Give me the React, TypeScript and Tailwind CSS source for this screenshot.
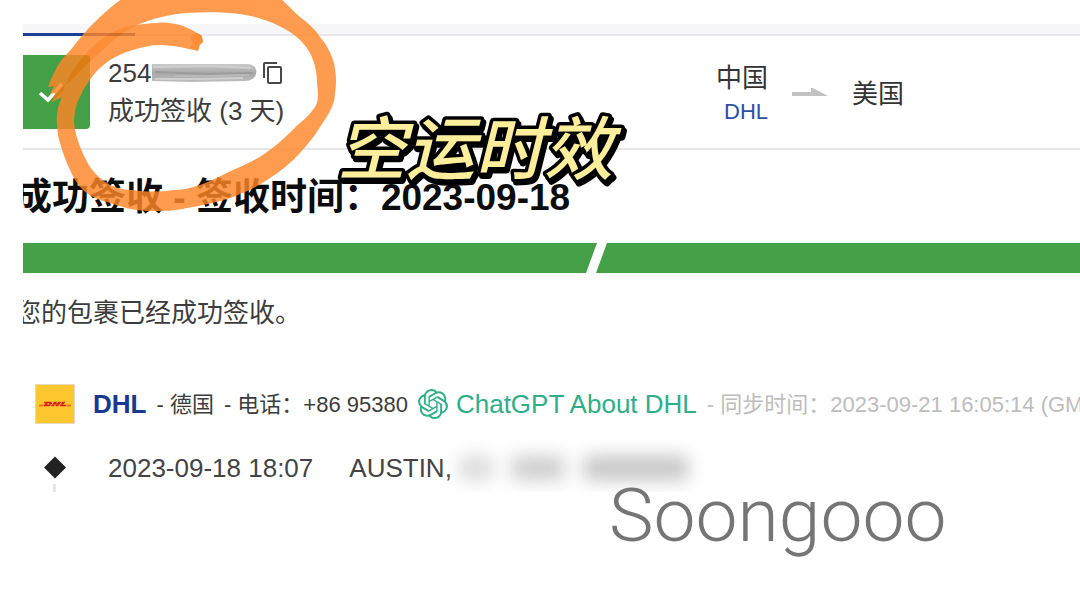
import React from 'react';
import { MdContentCopy } from 'react-icons/md';
import { SiDhl, SiOpenai } from 'react-icons/si';

interface TrackingEvent {
    time: string;
    place: string;
}

const events: TrackingEvent[] = [
    { time: '2023-09-18 18:07', place: 'AUSTIN,' }
];

// Tab strip with the active tab underline
const TabStrip: React.FC = () => (
    <div className="flex h-3 items-end border-b-2 border-[#e8e8ec] bg-[#f7f7fa]">
        <div className="-mb-0.5 h-[3px] w-28 bg-[#1d3f94]" />
    </div>
);

// Hidden part of the tracking number
const Scribble: React.FC = () => (
    <svg className="h-5 w-[106px]" viewBox="0 0 106 20" fill="none">
        <defs>
            <linearGradient id="scribble" x1="0" y1="0" x2="0" y2="1">
                <stop offset="0" stopColor="#c9c9c9" />
                <stop offset="0.5" stopColor="#a9a9a9" />
                <stop offset="1" stopColor="#bdbdbd" />
            </linearGradient>
        </defs>
        <path d="M1 1 H98 Q107 3 105 11 Q103 18 94 18 L40 19 L1 18Z" fill="url(#scribble)" />
        <path d="M2 4 L60 3 L100 5 M4 16 L50 16 L92 15" stroke="#cfcfcf" strokeWidth="2" />
        <path d="M4 9 L30 10 L58 11 L102 10" stroke="#9c9c9c" strokeWidth="2" />
        <path d="M24 13 L54 13 L98 12" stroke="#bcbcbc" strokeWidth="1.5" />
    </svg>
);

const ShipmentHeader: React.FC = () => (
    <header className="grid grid-cols-[693fr_364fr] items-center border-b-2 border-[#e6e6e6] py-[18px]">
        <div className="flex items-center gap-[18px]">
            <div className="flex h-[74px] w-[67px] items-center rounded-r-sm bg-[#43a047] pl-3.5">
                <svg className="size-7" viewBox="0 0 28 28" fill="none">
                    <path d="M3 15 L11 22 L25 6" stroke="#fff" strokeWidth="3.6" />
                </svg>
            </div>
            <div className="text-[26px] leading-[38px] text-[#3c3c3c]">
                <div className="flex items-center">
                    <span>254</span>
                    <Scribble />
                    <button type="button" aria-label="复制" className="ml-1 text-[#484848]">
                        <MdContentCopy className="size-6" />
                    </button>
                </div>
                <p>成功签收 (3 天)</p>
            </div>
        </div>
        <div className="flex items-center gap-6 pt-1 text-[26px] leading-9 text-[#333]">
            <div className="text-right">
                <p>中国</p>
                <a href="#dhl" className="block text-[22px] leading-8 text-[#2a4fa5]">DHL</a>
            </div>
            <svg className="h-3 w-9" viewBox="0 0 36 12">
                <path d="M0 4 H19 V-1 L36 8 H0Z" fill="#c2c2c2" />
            </svg>
            <p>美国</p>
        </div>
    </header>
);

const ProgressBar: React.FC = () => (
    <svg className="block h-[30px] w-full" viewBox="0 0 1057 30" preserveAspectRatio="none">
        <rect width="1057" height="30" fill="#43a047" />
        <path d="M574 0 H584 L573 30 H563Z" fill="#fff" />
    </svg>
);

const CarrierRow: React.FC = () => (
    <div className="ml-3 flex items-center gap-2.5 text-[22px] whitespace-nowrap text-[#3c3c3c]">
        <div className="mr-2 flex size-10 shrink-0 items-center justify-center border border-[#e2d9bf] bg-[#ffc72f]">
            <SiDhl className="size-8 text-[#d8201f]" />
        </div>
        <a href="#dhl" className="text-[26px] font-bold text-[#173a8f]">DHL</a>
        <span>- 德国</span>
        <span>- 电话：+86 95380</span>
        <a href="#chatgpt" className="flex items-center gap-2 text-[26px] text-[#2fae88]">
            <SiOpenai className="size-[30px]" />
            ChatGPT About DHL
        </a>
        <span className="text-[#bdbdbd]">- 同步时间：2023-09-21 16:05:14 (GMT+8)</span>
    </div>
);

const EventRow: React.FC<TrackingEvent> = ({ time, place }) => (
    <li className="flex items-center text-[26px] leading-8 text-[#444]">
        <svg className="ml-5 h-8 w-6" viewBox="0 0 24 32">
            <path d="M12 4.5 L23 15.5 L12 26.5 L1 15.5Z" fill="#222" />
        </svg>
        <time className="ml-[41px]">{time}</time>
        <span className="ml-9">{place}</span>
        <div className="ml-2 flex items-center gap-5 opacity-80 blur-[9px]">
            <div className="h-6 w-8 bg-[#cfcfcf]" />
            <div className="h-6 w-13 bg-[#c0c0c0]" />
            <div className="h-6 w-26 bg-[#b6b6b6]" />
        </div>
    </li>
);

// Hand-drawn marker ring around the tracking number
const MarkerRing: React.FC = () => (
    <svg className="pointer-events-none absolute top-0 left-0 h-[220px] w-[350px]" viewBox="0 0 350 220">
        <g opacity="0.82">
            <path
                fill="#ff8628"
                fillRule="evenodd"
                d="M123 -2 C112 6 105 12 97 20 C87 29 80 38 73 47 C65 56 61 60 57 67 L51 79 L48 87 L54 86 L50 94 L55 93 L52 102 L62 97
                   C58 106 56 114 57 123 C57 130 58 137 60 143 C63 153 66 162 70 170 C74 179 78 185 83 190 C90 196 99 200 107 202
                   C121 207 135 211 150 211 C163 211 175 211 187 208 C204 205 219 202 233 197 C246 192 257 187 267 180
                   C280 172 291 163 300 153 C307 145 314 137 320 127 C329 114 335 104 335 93 C337 81 336 70 333 60
                   C330 51 326 44 320 37 C315 29 308 23 300 17 C293 11 288 5 280 -2 Z
                   M137 25 C152 19 169 14 187 13 C205 12 223 12 240 14 C254 16 266 20 277 25 C286 29 294 34 300 40
                   C306 46 311 53 313 60 C316 68 317 75 317 83 C318 92 319 101 315 107 C311 113 306 118 300 123
                   C289 133 279 144 267 152 C256 160 245 165 233 170 C222 175 211 181 200 185 C191 188 182 190 173 190
                   C160 192 146 192 133 190 C125 190 116 188 110 185 C102 180 96 175 90 167 C82 153 76 139 74 123
                   C74 113 76 104 80 97 C83 90 87 83 92 77 C97 70 103 65 110 60 C117 56 125 52 133 50
                   C142 47 151 45 160 45 C167 45 174 46 180 47 L198 51 L200 45 L203 42 L201 35 L197 33
                   C192 30 187 27 180 25 C172 23 164 22 157 23 C150 23 143 24 137 25Z"
            />
            <path fill="#fc760c" d="M137 25 C119 26 99 38 84 56 C76 65 68 76 63 91 L52 102 C54 95 61 86 70 82 C82 68 96 56 108 45 C118 36 127 30 137 25Z" />
            <path fill="#fc760c" d="M190 37 L197 33 L202 36 L203 42 L199 44 L198 50 L190 48 L193 43Z" />
        </g>
    </svg>
);

// Caption sticker with a rounded outline and a hard shadow
const Caption: React.FC = () => (
    <svg className="absolute top-[100px] left-[330px] h-[100px] w-[320px] text-[69px] font-medium italic drop-shadow-[2px_3px_0_#000]" viewBox="0 0 320 100">
        <text x="7" y="74" fill="#fdee9c" stroke="#000" strokeWidth="7" strokeLinejoin="round" paintOrder="stroke">空运时效</text>
    </svg>
);

const App: React.FC = () => (
    <main className="relative min-h-screen overflow-hidden bg-white font-['Liberation_Sans','Noto_Sans_CJK_SC',sans-serif]">
        <div className="ml-[23px] overflow-hidden pt-6">
            <TabStrip />
            <ShipmentHeader />
            <h1 className="-ml-2 pt-6 pb-[22px] text-[37px] leading-[47px] font-bold whitespace-nowrap text-[#0c0c0c]">
                成功签收 - 签收时间：2023-09-18
            </h1>
            <ProgressBar />
            <p className="mt-6 -ml-2 text-[26px] leading-8 text-[#3c3c3c]">您的包裹已经成功签收。</p>
            <section className="mt-[55px]">
                <CarrierRow />
                <ul className="mt-7">
                    {events.map(event => (
                        <EventRow key={event.time} {...event} />
                    ))}
                </ul>
                <div className="ml-[30px] h-2 w-[3px] bg-[#e4e4e4]" />
            </section>
        </div>

        <MarkerRing />
        <Caption />

        {/* Watermark */}
        <p className="absolute top-[469px] left-[609px] font-['Roboto',sans-serif] text-[75px] leading-[92px] font-light text-[#757575]">
            Soongooo
        </p>
    </main>
);

export default App;
